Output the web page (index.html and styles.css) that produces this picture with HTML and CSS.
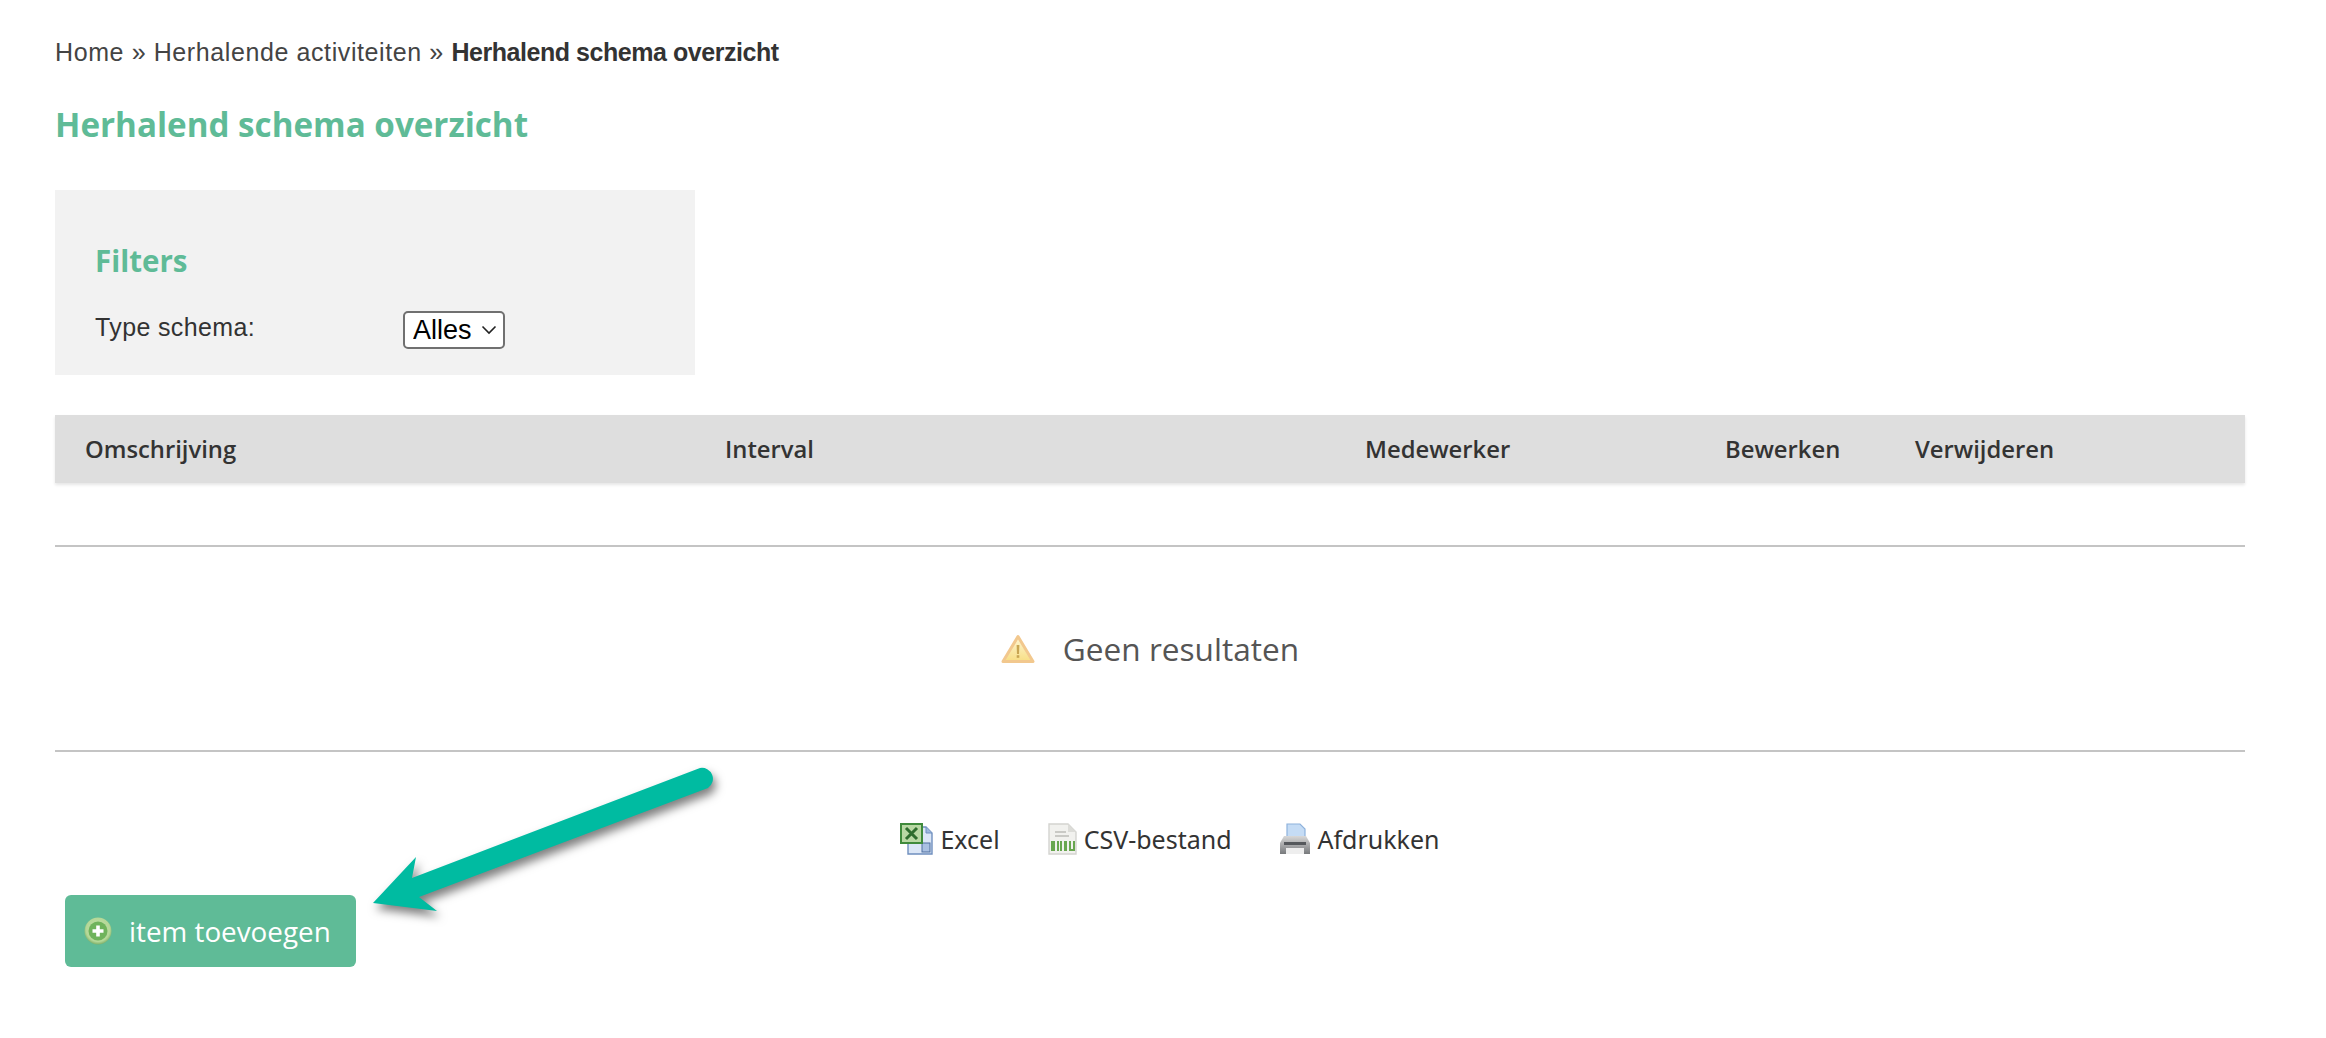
FILE: index.html
```html
<!DOCTYPE html>
<html lang="en">
<head>
  <meta charset="UTF-8">
  <meta name="viewport" content="width=device-width, initial-scale=1.0">
  <title>Herhalend schema overzicht</title>
  <link rel="stylesheet" href="styles.css">
</head>
<body>

  <div class="page">
    <div class="breadcrumb">Home » Herhalende activiteiten » <b>Herhalend schema overzicht</b></div>

    <h1 class="page-title">Herhalend schema overzicht</h1>

    <div class="filters">
      <h2 class="filters-title">Filters</h2>
      <div class="filter-row">
        <label class="filter-label">Type schema:</label>
        <span class="select-wrap">
          <select class="filter-select"><option>Alles</option></select>
          <svg class="select-arrow" viewBox="0 0 16 10" width="16" height="10">
            <path d="M1.5 1.5 L8 8 L14.5 1.5" fill="none" stroke="#222" stroke-width="1.6"/>
          </svg>
        </span>
      </div>
    </div>

    <div class="table-head">
      <div>Omschrijving</div>
      <div>Interval</div>
      <div>Medewerker</div>
      <div>Bewerken</div>
      <div>Verwijderen</div>
    </div>

    <div class="no-results">
      <svg class="warn-icon" viewBox="0 0 34 30" width="34" height="30">
        <defs>
          <linearGradient id="warnFill" x1="0" y1="0" x2="0" y2="1">
            <stop offset="0" stop-color="#fdf6d4"/>
            <stop offset="1" stop-color="#f8de84"/>
          </linearGradient>
        </defs>
        <path d="M17 2.5 L32 27.5 H2 Z" fill="url(#warnFill)" stroke="#f2c88e" stroke-width="3" stroke-linejoin="round"/>
        <path d="M15.6 11 H18.4 L18 20 H16 Z" fill="#c8a552"/>
        <rect x="15.7" y="21.2" width="2.6" height="2.6" fill="#c8a552"/>
      </svg>
      <span>Geen resultaten</span>
    </div>

    <div class="exports">
      <a class="export-link">
        <svg viewBox="0 0 33 32" width="33" height="32">
          <path d="M8 4 H26 L32 10 V31 H8 Z" fill="#dbe6f6" stroke="#6f8fbe" stroke-width="1.4"/>
          <path d="M26 4 V10 H32" fill="#9db8de" stroke="#6f8fbe" stroke-width="1"/>
          <rect x="22" y="20" width="8" height="9" fill="#a9c0e2" stroke="#4f6f9f"/>
          <rect x="1" y="1" width="21" height="19" fill="#b9d8a4" stroke="#3f8a3b" stroke-width="2"/>
          <path d="M6 5 L17 16 M17 5 L6 16" stroke="#2f6d2e" stroke-width="3"/>
        </svg>
        Excel
      </a>
      <a class="export-link">
        <svg viewBox="0 0 30 32" width="30" height="32">
          <path d="M2 1 H21 L29 9 V31 H2 Z" fill="#f1f1ee" stroke="#d4d4d0" stroke-width="1.4"/>
          <path d="M21 1 V9 H29" fill="#dcdcd8"/>
          <path d="M8 9 H19 M8 13 H22" stroke="#c9c9c5" stroke-width="2"/>
          <rect x="4" y="18" width="4" height="10" fill="#68a64f"/>
          <path d="M11 18 V28 M14 18 V28" stroke="#68a64f" stroke-width="2"/>
          <rect x="17" y="18" width="3" height="10" fill="#68a64f"/>
          <path d="M23 18 V27 H27 V18" fill="none" stroke="#68a64f" stroke-width="2"/>
        </svg>
        CSV-bestand
      </a>
      <a class="export-link">
        <svg viewBox="0 0 32 32" width="32" height="32">
          <defs>
            <linearGradient id="printBody" x1="0" y1="0" x2="0" y2="1">
              <stop offset="0" stop-color="#d8d8d8"/>
              <stop offset="1" stop-color="#77797c"/>
            </linearGradient>
          </defs>
          <path d="M8 1 H21 L26 6 V16 H8 Z" fill="#c5dcf5" stroke="#8eb2dc" stroke-width="1.2"/>
          <path d="M5 13 H27 L31 20 V31 H1 V20 Z" fill="url(#printBody)"/>
          <rect x="5" y="19" width="22" height="3" fill="#55585c"/>
          <rect x="7" y="25" width="18" height="6" fill="#eeeeee"/>
        </svg>
        Afdrukken
      </a>
    </div>

    <button class="add-btn">
      <svg viewBox="0 0 28 28" width="28" height="28">
        <defs>
          <radialGradient id="addFill" cx="0.5" cy="0.45" r="0.55">
            <stop offset="0" stop-color="#c4e0a8"/>
            <stop offset="0.8" stop-color="#b4d898"/>
            <stop offset="1" stop-color="#7fb068"/>
          </radialGradient>
        </defs>
        <circle cx="14" cy="14" r="13.5" fill="url(#addFill)"/>
        <circle cx="14" cy="14" r="9.5" fill="#6fb35c"/>
        <path d="M14 8.5 V19.5 M8.5 14 H19.5" stroke="#fff" stroke-width="3.6"/>
      </svg>
      item toevoegen
    </button>
  </div>

  <!-- annotation arrow on top of the screenshot -->
  <svg class="arrow" viewBox="0 0 380 180" width="380" height="180">
    <path d="M346 18 A11 11 0 0 1 354 38 L65 147 L83 161 L19 153 L62 107 L58 128 Z" fill="#00bba1"/>
  </svg>

</body>
</html>
```

FILE: styles.css
```css
html, body {
  margin: 0;
  padding: 0;
  background-color: #fff;
  color: #333;
  font-family: "Open Sans", sans-serif;
}

.page {
  width: 2190px;
  margin-left: 55px;
  padding-top: 35px;
}

.breadcrumb {
  font-family: "Liberation Sans", Arial, sans-serif;
  font-size: 25px;
  line-height: 34px;
  letter-spacing: 0.6px;
  color: #444;
}

.breadcrumb b {
  color: #333;
  font-weight: bold;
  letter-spacing: -0.45px;
}

.page-title {
  margin: 33px 0 0;
  font-size: 33.2px;
  line-height: 46px;
  font-weight: 700;
  color: #5fbb97;
}

.filters {
  width: 640px;
  height: 185px;
  margin-top: 42px;
  padding: 51px 40px 0;
  box-sizing: border-box;
  background-color: #f2f2f2;
}

.filters-title {
  margin: 0;
  font-size: 29.5px;
  line-height: 40px;
  font-weight: 700;
  color: #5fbb97;
}

.filter-row {
  display: flex;
  align-items: flex-start;
  margin-top: 30px;
}

.filter-label {
  width: 308px;
  font-family: "Liberation Sans", Arial, sans-serif;
  font-size: 25px;
  line-height: 32px;
  letter-spacing: 0.37px;
  color: #333;
}

.select-wrap {
  position: relative;
  display: block;
}

.filter-select {
  display: block;
  appearance: none;
  width: 102px;
  height: 38px;
  padding: 0 0 0 8px;
  border: 2px solid #707070;
  border-radius: 5px;
  font-family: "Liberation Sans", Arial, sans-serif;
  font-size: 27px;
  background-color: #fff;
  color: #000;
}

.select-arrow {
  position: absolute;
  right: 8px;
  top: 14px;
}

.table-head {
  display: grid;
  grid-template-columns: 640px 640px 360px 190px 1fr;
  align-items: center;
  height: 68px;
  margin-top: 40px;
  padding-left: 30px;
  box-sizing: border-box;
  background-color: #dedede;
  box-shadow: 0 2px 3px rgba(0, 0, 0, 0.1);
  font-size: 23.8px;
  font-weight: 600;
  color: #333;
}

.no-results {
  display: flex;
  align-items: center;
  justify-content: center;
  gap: 28px;
  height: 203px;
  margin-top: 62px;
  border-top: 2px solid #c4c4c4;
  border-bottom: 2px solid #c4c4c4;
  font-size: 31.6px;
  color: #555;
}

.exports {
  display: flex;
  justify-content: center;
  gap: 47px;
  margin-top: 70px;
  padding-left: 40px;
}

.export-link {
  display: flex;
  align-items: center;
  gap: 7px;
  font-family: "Noto Sans", sans-serif;
  font-size: 25px;
  line-height: 34px;
  color: #333;
}

.add-btn {
  display: flex;
  align-items: center;
  gap: 17px;
  width: 291px;
  height: 72px;
  margin: 39px 0 0 10px;
  padding: 0 0 0 19px;
  border: none;
  border-radius: 6px;
  background-color: #5fbb97;
  color: #fff;
  font-family: "Open Sans", sans-serif;
  font-size: 27.8px;
}

.arrow {
  position: absolute;
  left: 354px;
  top: 750px;
  filter: drop-shadow(3px 6px 5px rgba(0, 0, 0, 0.5));
}
```
